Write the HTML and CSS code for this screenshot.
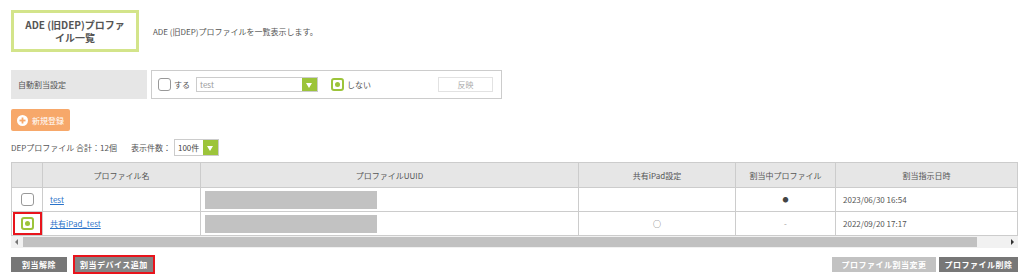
FILE: index.html
```html
<!DOCTYPE html>
<html lang="ja">
<head>
  <meta charset="UTF-8">
  <meta name="viewport" content="width=device-width, initial-scale=1.0">
  <title>ADE (旧DEP)プロファイル一覧</title>
  <link rel="stylesheet" href="styles.css">
</head>
<body>
  <div class="page">
    <!-- Page Header -->
    <div class="page-head">
      <h1 class="page-title">ADE (旧DEP)プロファ<br>イル一覧</h1>
      <p class="page-desc">ADE (旧DEP)プロファイルを一覧表示します。</p>
    </div>

    <!-- Auto Assign Setting -->
    <div class="auto-row">
      <div class="auto-label">自動割当設定</div>
      <div class="auto-box">
        <label class="opt"><span class="check"></span>する</label>
        <div class="select select-wide">
          <span class="select-text">test</span>
          <span class="select-arrow"></span>
        </div>
        <label class="opt opt-on"><span class="check checked"></span>しない</label>
        <span class="btn-apply">反映</span>
      </div>
    </div>

    <!-- New Button -->
    <a class="btn-new" href="#">
      <svg class="plus" width="11" height="11" viewBox="0 0 11 11">
        <circle cx="5.5" cy="5.5" r="5.5" fill="#fff"/>
        <rect x="2.5" y="4.6" width="6" height="1.8" fill="#f7a86a"/>
        <rect x="4.6" y="2.5" width="1.8" height="6" fill="#f7a86a"/>
      </svg>
      新規登録
    </a>

    <!-- Count Line -->
    <div class="count-row">
      <span>DEPプロファイル 合計：12個</span>
      <span class="count-sep">表示件数：</span>
      <div class="select select-small">
        <span class="select-text">100件</span>
        <span class="select-arrow"></span>
      </div>
    </div>

    <!-- Profile Table -->
    <div class="table-wrap">
      <table>
        <thead>
          <tr>
            <th class="c-check"></th>
            <th class="c-name">プロファイル名</th>
            <th class="c-uuid">プロファイルUUID</th>
            <th class="c-ipad">共有iPad設定</th>
            <th class="c-cur">割当中プロファイル</th>
            <th class="c-date">割当指示日時</th>
          </tr>
        </thead>
        <tbody>
          <tr>
            <td class="center"><span class="check"></span></td>
            <td><a href="#">test</a></td>
            <td><span class="mask"></span></td>
            <td class="center"></td>
            <td class="center mark">●</td>
            <td>2023/06/30 16:54</td>
          </tr>
          <tr>
            <td class="center"><span class="hl"><span class="check checked"></span></span></td>
            <td><a href="#">共有iPad_test</a></td>
            <td><span class="mask"></span></td>
            <td class="center">○</td>
            <td class="center dash">-</td>
            <td>2022/09/20 17:17</td>
          </tr>
        </tbody>
      </table>
      <div class="hscroll">
        <span class="arrow left"></span>
        <span class="thumb"></span>
        <span class="arrow right"></span>
      </div>
    </div>

    <!-- Bottom Buttons -->
    <div class="actions">
      <div class="actions-left">
        <span class="btn btn-dark btn-release">割当解除</span>
        <span class="hl-btn"><span class="btn btn-mid">割当デバイス追加</span></span>
      </div>
      <div class="actions-right">
        <span class="btn btn-light btn-change">プロファイル割当変更</span>
        <span class="btn btn-dark btn-delete">プロファイル削除</span>
      </div>
    </div>
  </div>
</body>
</html>
```

FILE: styles.css
```css
/* Global */
body {
  margin: 0;
  background: #fff;
  font-family: "Noto Sans CJK JP", "Noto Sans", sans-serif;
  color: #555;
  font-size: 8px;
}

.page {
  padding: 10px 6px 0 11px;
}

/* Header */
.page-head {
  display: flex;
  align-items: center;
}

.page-title {
  box-sizing: border-box;
  width: 128px;
  height: 42px;
  margin: 0;
  border: 3px solid #d3e48a;
  display: flex;
  align-items: center;
  justify-content: center;
  text-align: center;
  font-size: 10px;
  line-height: 13px;
  font-weight: bold;
  color: #555;
}

.page-desc {
  margin: 0 0 0 14px;
  font-size: 8px;
  color: #555;
}

/* Auto assign */
.auto-row {
  display: flex;
  gap: 4px;
  margin-top: 18px;
}

.auto-label {
  width: 136px;
  height: 29px;
  background: #e6e6e6;
  display: flex;
  align-items: center;
  padding-left: 7px;
  box-sizing: border-box;
  color: #555;
}

.auto-box {
  box-sizing: border-box;
  width: 351px;
  height: 29px;
  border: 1px solid #ccc;
  display: flex;
  align-items: center;
  padding-left: 6px;
}

.opt {
  display: flex;
  align-items: center;
  gap: 3px;
  font-size: 8px;
  color: #555;
  white-space: nowrap;
  flex-shrink: 0;
}

.opt-on {
  margin-left: 13px;
}

.check {
  box-sizing: border-box;
  display: inline-block;
  width: 13px;
  height: 13px;
  border: 1px solid #999;
  border-radius: 3px;
  background: #fff;
  position: relative;
  flex-shrink: 0;
}

.check.checked {
  border: 2px solid #9cc43a;
}

.check.checked::after {
  content: "";
  position: absolute;
  left: 2px;
  top: 2px;
  width: 5px;
  height: 5px;
  border-radius: 50%;
  background: #9cc43a;
}

/* Select */
.select {
  box-sizing: border-box;
  display: flex;
  align-items: stretch;
  border: 1px solid #ccc;
  background: #fff;
  flex-shrink: 0;
}

.select-wide {
  width: 122px;
  height: 15px;
  margin-left: 6px;
}

.select-small {
  width: 45px;
  height: 17px;
}

.select-text {
  flex: 1;
  display: flex;
  align-items: center;
  padding-left: 3px;
  color: #999;
}

.select-small .select-text {
  color: #444;
}

.select-arrow {
  width: 15px;
  background: #9cc43a;
  position: relative;
}

.select-arrow::after {
  content: "";
  position: absolute;
  left: 4px;
  top: 50%;
  margin-top: -2px;
  border-left: 3.5px solid transparent;
  border-right: 3.5px solid transparent;
  border-top: 5px solid #fff;
}

.btn-apply {
  box-sizing: border-box;
  margin-left: 67px;
  width: 55px;
  height: 15px;
  border: 1px solid #e2e2e2;
  display: flex;
  align-items: center;
  justify-content: center;
  color: #aaa;
  flex-shrink: 0;
}

/* New button */
.btn-new {
  display: flex;
  align-items: center;
  gap: 4px;
  width: 59px;
  height: 22px;
  box-sizing: border-box;
  padding-left: 6px;
  margin-top: 10px;
  background: #f7a86a;
  color: #fff;
  text-decoration: none;
  border-radius: 2px;
}

/* Count */
.count-row {
  display: flex;
  align-items: center;
  margin-top: 8px;
  color: #555;
}

.count-sep {
  margin-left: 14px;
  margin-right: 3px;
}

/* Table */
.table-wrap {
  margin-top: 6px;
}

table {
  width: 1007px;
  border-collapse: collapse;
  table-layout: fixed;
}

th, td {
  border: 1px solid #ccc;
  height: 23px;
  padding: 0 7px;
  font-weight: normal;
  text-align: left;
  color: #555;
}

th {
  background: #e6e6e6;
  text-align: center;
  height: 24px;
}

.c-check { width: 16px; }
.c-name { width: 143px; }
.c-uuid { width: 363px; }
.c-ipad { width: 142px; }
.c-cur { width: 85px; }

td.center {
  text-align: center;
  padding: 0;
}

td .check {
  vertical-align: middle;
}

.mark {
  font-size: 6px;
  color: #444;
}

.dash {
  color: #999;
}

a {
  color: #2b73c9;
  text-decoration: underline;
}

.mask {
  display: block;
  width: 172px;
  height: 18px;
  background: #c2c2c2;
  margin-left: -3px;
}

.hl {
  display: inline-flex;
  align-items: center;
  justify-content: center;
  box-sizing: border-box;
  width: 29px;
  height: 23px;
  border: 2px solid #e8141c;
  vertical-align: middle;
}

/* Scrollbar */
.hscroll {
  display: flex;
  align-items: center;
  width: 1007px;
  height: 12px;
  background: #f1f1f1;
}

.arrow {
  width: 12px;
  height: 12px;
  position: relative;
}

.arrow::after {
  content: "";
  position: absolute;
  top: 3px;
  border-top: 3px solid transparent;
  border-bottom: 3px solid transparent;
}

.arrow.left::after {
  left: 4px;
  border-right: 3px solid #777;
}

.arrow.right::after {
  left: 5px;
  border-left: 3px solid #333;
}

.thumb {
  width: 954px;
  height: 10px;
  background: #c1c1c1;
  margin-right: auto;
}

/* Bottom buttons */
.actions {
  display: flex;
  justify-content: space-between;
  align-items: center;
  margin-top: 7px;
  width: 1007px;
}

.actions-left,
.actions-right {
  display: flex;
  align-items: center;
  gap: 3px;
}

.actions-left {
  gap: 6px;
}

.btn {
  box-sizing: border-box;
  display: flex;
  align-items: center;
  justify-content: center;
  height: 15px;
  color: #fff;
  font-weight: bold;
  font-size: 8px;
  letter-spacing: 0.5px;
  white-space: nowrap;
}

.btn-release { width: 56px; }
.btn-mid { width: 78px; }
.btn-change { width: 104px; }
.btn-delete { width: 79px; }

.btn-dark {
  background: #777;
}

.btn-mid {
  background: #858585;
}

.btn-light {
  background: #c2c2c2;
}

.hl-btn {
  display: inline-flex;
  border: 2px solid #e8141c;
  padding: 0;
}
```
